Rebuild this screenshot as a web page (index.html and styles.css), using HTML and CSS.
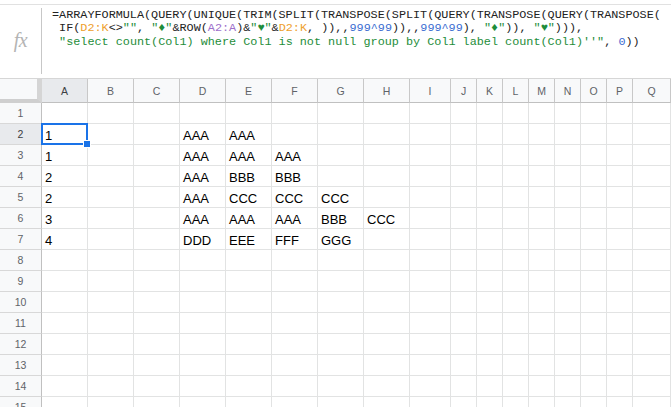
FILE: index.html
```html
<!DOCTYPE html>
<html>
<head>
<meta charset="utf-8">
<link rel="stylesheet" href="styles.css">
</head>
<body>
<div class="app">
  <div class="fbar">
    <div class="fx">fx</div>
    <div class="formula"><div class="ln">=ARRAYFORMULA(QUERY(UNIQUE(TRIM(SPLIT(TRANSPOSE(SPLIT(QUERY(TRANSPOSE(QUERY(TRANSPOSE(</div><div class="ln"> IF(<span class="rg1">D2:K</span>&lt;&gt;<span class="str">""</span>, <span class="str">"♦"</span>&amp;ROW(<span class="rg2">A2:A</span>)&amp;<span class="str">"♥"</span>&amp;<span class="rg1">D2:K</span>, )),,<span class="num">999^99</span>)),,<span class="num">999^99</span>), <span class="str">"♦"</span>)), <span class="str">"♥"</span>))),</div><div class="ln"> <span class="str">"select count(Col1) where Col1 is not null group by Col1 label count(Col1)''"</span>, <span class="num">0</span>))</div></div>
  </div>
  <div class="sheet">
    <div class="corner"></div>
    <div class="ch sel">A</div><div class="ch">B</div><div class="ch">C</div><div class="ch">D</div><div class="ch">E</div><div class="ch">F</div><div class="ch">G</div><div class="ch">H</div><div class="ch">I</div><div class="ch">J</div><div class="ch">K</div><div class="ch">L</div><div class="ch">M</div><div class="ch">N</div><div class="ch">O</div><div class="ch">P</div><div class="ch">Q</div>

    <div class="rh">1</div><div class="c"></div><div class="c"></div><div class="c"></div><div class="c"></div><div class="c"></div><div class="c"></div><div class="c"></div><div class="c"></div><div class="c"></div><div class="c"></div><div class="c"></div><div class="c"></div><div class="c"></div><div class="c"></div><div class="c"></div><div class="c"></div><div class="c"></div>

    <div class="rh sel">2</div><div class="c active">1<span class="selbox"></span><span class="handle"></span></div><div class="c"></div><div class="c"></div><div class="c">AAA</div><div class="c">AAA</div><div class="c"></div><div class="c"></div><div class="c"></div><div class="c"></div><div class="c"></div><div class="c"></div><div class="c"></div><div class="c"></div><div class="c"></div><div class="c"></div><div class="c"></div><div class="c"></div>

    <div class="rh">3</div><div class="c">1</div><div class="c"></div><div class="c"></div><div class="c">AAA</div><div class="c">AAA</div><div class="c">AAA</div><div class="c"></div><div class="c"></div><div class="c"></div><div class="c"></div><div class="c"></div><div class="c"></div><div class="c"></div><div class="c"></div><div class="c"></div><div class="c"></div><div class="c"></div>

    <div class="rh">4</div><div class="c">2</div><div class="c"></div><div class="c"></div><div class="c">AAA</div><div class="c">BBB</div><div class="c">BBB</div><div class="c"></div><div class="c"></div><div class="c"></div><div class="c"></div><div class="c"></div><div class="c"></div><div class="c"></div><div class="c"></div><div class="c"></div><div class="c"></div><div class="c"></div>

    <div class="rh">5</div><div class="c">2</div><div class="c"></div><div class="c"></div><div class="c">AAA</div><div class="c">CCC</div><div class="c">CCC</div><div class="c">CCC</div><div class="c"></div><div class="c"></div><div class="c"></div><div class="c"></div><div class="c"></div><div class="c"></div><div class="c"></div><div class="c"></div><div class="c"></div><div class="c"></div>

    <div class="rh">6</div><div class="c">3</div><div class="c"></div><div class="c"></div><div class="c">AAA</div><div class="c">AAA</div><div class="c">AAA</div><div class="c">BBB</div><div class="c">CCC</div><div class="c"></div><div class="c"></div><div class="c"></div><div class="c"></div><div class="c"></div><div class="c"></div><div class="c"></div><div class="c"></div><div class="c"></div>

    <div class="rh">7</div><div class="c">4</div><div class="c"></div><div class="c"></div><div class="c">DDD</div><div class="c">EEE</div><div class="c">FFF</div><div class="c">GGG</div><div class="c"></div><div class="c"></div><div class="c"></div><div class="c"></div><div class="c"></div><div class="c"></div><div class="c"></div><div class="c"></div><div class="c"></div><div class="c"></div>

    <div class="rh">8</div><div class="c"></div><div class="c"></div><div class="c"></div><div class="c"></div><div class="c"></div><div class="c"></div><div class="c"></div><div class="c"></div><div class="c"></div><div class="c"></div><div class="c"></div><div class="c"></div><div class="c"></div><div class="c"></div><div class="c"></div><div class="c"></div><div class="c"></div>
    <div class="rh">9</div><div class="c"></div><div class="c"></div><div class="c"></div><div class="c"></div><div class="c"></div><div class="c"></div><div class="c"></div><div class="c"></div><div class="c"></div><div class="c"></div><div class="c"></div><div class="c"></div><div class="c"></div><div class="c"></div><div class="c"></div><div class="c"></div><div class="c"></div>
    <div class="rh">10</div><div class="c"></div><div class="c"></div><div class="c"></div><div class="c"></div><div class="c"></div><div class="c"></div><div class="c"></div><div class="c"></div><div class="c"></div><div class="c"></div><div class="c"></div><div class="c"></div><div class="c"></div><div class="c"></div><div class="c"></div><div class="c"></div><div class="c"></div>
    <div class="rh">11</div><div class="c"></div><div class="c"></div><div class="c"></div><div class="c"></div><div class="c"></div><div class="c"></div><div class="c"></div><div class="c"></div><div class="c"></div><div class="c"></div><div class="c"></div><div class="c"></div><div class="c"></div><div class="c"></div><div class="c"></div><div class="c"></div><div class="c"></div>
    <div class="rh">12</div><div class="c"></div><div class="c"></div><div class="c"></div><div class="c"></div><div class="c"></div><div class="c"></div><div class="c"></div><div class="c"></div><div class="c"></div><div class="c"></div><div class="c"></div><div class="c"></div><div class="c"></div><div class="c"></div><div class="c"></div><div class="c"></div><div class="c"></div>
    <div class="rh">13</div><div class="c"></div><div class="c"></div><div class="c"></div><div class="c"></div><div class="c"></div><div class="c"></div><div class="c"></div><div class="c"></div><div class="c"></div><div class="c"></div><div class="c"></div><div class="c"></div><div class="c"></div><div class="c"></div><div class="c"></div><div class="c"></div><div class="c"></div>
    <div class="rh">14</div><div class="c"></div><div class="c"></div><div class="c"></div><div class="c"></div><div class="c"></div><div class="c"></div><div class="c"></div><div class="c"></div><div class="c"></div><div class="c"></div><div class="c"></div><div class="c"></div><div class="c"></div><div class="c"></div><div class="c"></div><div class="c"></div><div class="c"></div>
    <div class="rh">15</div><div class="c"></div><div class="c"></div><div class="c"></div><div class="c"></div><div class="c"></div><div class="c"></div><div class="c"></div><div class="c"></div><div class="c"></div><div class="c"></div><div class="c"></div><div class="c"></div><div class="c"></div><div class="c"></div><div class="c"></div><div class="c"></div><div class="c"></div>
  </div>
</div>
</body>
</html>
```
FILE: styles.css
```css
html, body {
  margin: 0;
  padding: 0;
  background: #fff;
  overflow: hidden;
}
body {
  width: 671px;
  height: 407px;
}
.app {
  padding-top: 4px;
}
.fbar {
  display: flex;
  border-top: 1px solid #e1e1e1;
  height: 69px;
  margin-bottom: 4px;
}
.fx {
  box-sizing: border-box;
  width: 42px;
  margin-top: 3px;
  border-right: 1px solid #c7c7c7;
  display: flex;
  align-items: center;
  justify-content: center;
  padding-bottom: 2px;
  font-family: "Liberation Serif", serif;
  font-style: italic;
  font-size: 20px;
  color: #b4b4b4;
  letter-spacing: -0.5px;
}
.formula {
  padding: 4px 0 0 10px;
  font-family: "Liberation Mono", "DejaVu Sans Mono", monospace;
  font-size: 11.8px;
  line-height: 13.3px;
  color: #222;
  white-space: pre;
}
.rg1 { color: #eea02c; }
.rg2 { color: #9e70cc; }
.str { color: #1e8d3a; }
.num { color: #3a6cd1; }

.sheet {
  display: grid;
  grid-template-columns: 42px repeat(8, 46px) 41px repeat(7, 26px) 1fr;
  grid-template-rows: 24px;
  grid-auto-rows: 21px;
  border-top: 1px solid #d6d6d6;
}
.corner {
  box-sizing: border-box;
  background: #f8f9fa;
  border-right: 5px solid #d5d5d5;
  border-bottom: 4px solid #cfcfcf;
}
.ch {
  box-sizing: border-box;
  background: #f8f9fa;
  border-right: 1px solid #c8c8c8;
  border-bottom: 1px solid #c0c0c0;
  display: flex;
  align-items: center;
  justify-content: center;
  font-family: "Liberation Sans", Arial, sans-serif;
  font-size: 10.5px;
  color: #5f6368;
}
.rh {
  box-sizing: border-box;
  background: #f8f9fa;
  border-right: 1px solid #c0c0c0;
  border-bottom: 1px solid #d8d8d8;
  display: flex;
  align-items: center;
  justify-content: center;
  font-family: "Liberation Sans", Arial, sans-serif;
  font-size: 10.5px;
  color: #5f6368;
}
.ch.sel, .rh.sel {
  background: #e8eaed;
  color: #3c4043;
}
.c {
  box-sizing: border-box;
  position: relative;
  border-right: 1px solid #e2e3e3;
  border-bottom: 1px solid #e2e3e3;
  display: flex;
  align-items: flex-end;
  padding: 0 3px 1px 3px;
  font-family: "Liberation Sans", Arial, sans-serif;
  font-size: 13px;
  line-height: 15px;
  color: #000;
  white-space: nowrap;
}
.selbox {
  position: absolute;
  left: -1px;
  top: -1px;
  right: -1px;
  bottom: -1px;
  border: 2px solid #1a73e8;
}
.handle {
  position: absolute;
  right: -4px;
  bottom: -4px;
  width: 6px;
  height: 6px;
  background: #1a73e8;
  border: 1px solid #fff;
  z-index: 2;
}
```
